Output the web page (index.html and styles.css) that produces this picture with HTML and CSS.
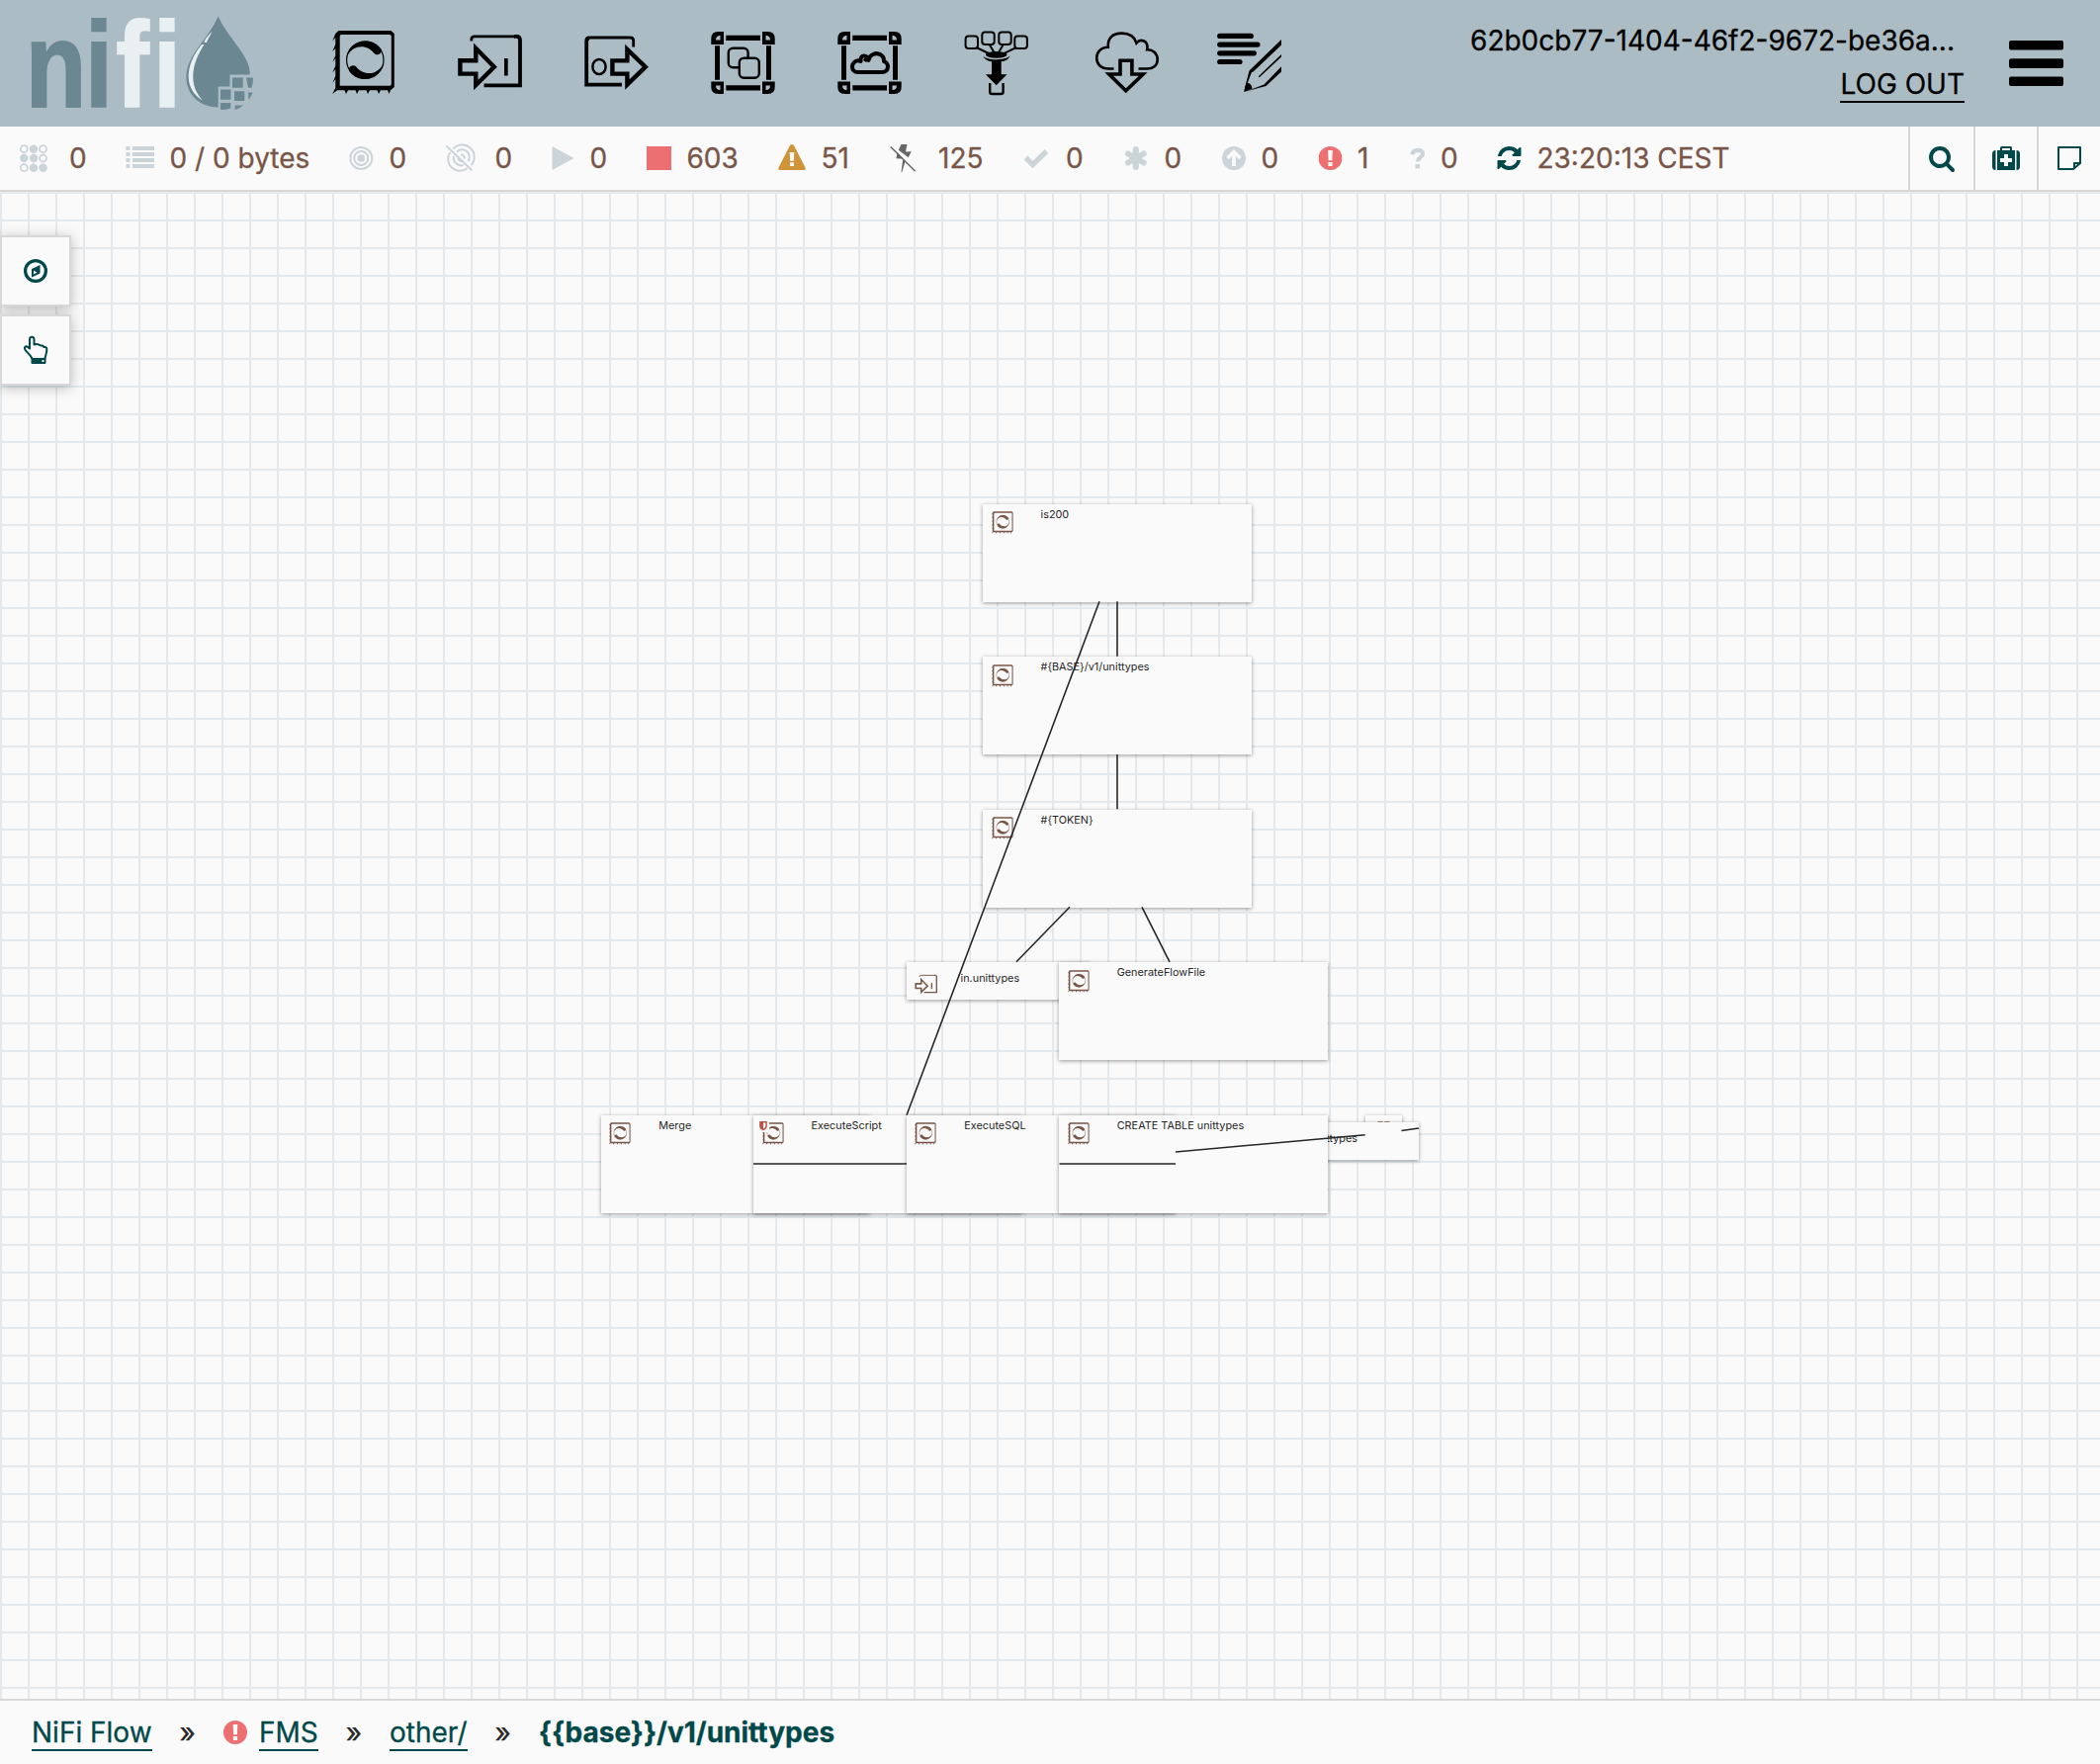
FILE: index.html
```html
<!DOCTYPE html>
<html lang="en">
<head>
<meta charset="utf-8">
<title>NiFi Flow</title>
<link rel="stylesheet" href="styles.css">
</head>
<body>
<svg class="defs" width="0" height="0" aria-hidden="true">
  <symbol id="processor" viewBox="30 30 66 66">
    <path fill-rule="evenodd" d="M38.5 31H91.5L94.8 34V88L91 91.3 89.5 95 88 91.3H81L79 95 77.5 91.3H70L68 95 66.500 91.300H59L57 95 55.500 91.300H48L46 95 44.500 91.300H37L32.300 95 35.300 88.500V80L32.300 84 35.300 77V70L32.300 73.500 35.300 66.500V59L32.300 63 35.300 56V49L32.300 52 35.300 45V38L32.300 41.500 35.300 34ZM41.500 35A1.800 1.800 0 0 0 39.700 36.800V86.700H90A1.800 1.800 0 0 0 91.800 84.900V36.800A1.800 1.800 0 0 0 90 35Z"/>
    <circle cx="65.300" cy="60.700" r="18.700" fill="none" stroke="currentColor" stroke-width="1.200"/>
    <path id="crescent" d="M46.500 57.500C49 47 57 41.400 65.300 41.400C72 41.400 77.500 44 81.300 49.500C83.500 53.500 77.500 57.500 74.300 53.800C68.500 46 54.500 43 46.500 57.500Z"/>
    <use href="#crescent" transform="rotate(180 65.300 60.700)"/>
  </symbol>
  <symbol id="input-port" viewBox="30 30 66 66">
    <path d="M44.800 41.500V40Q44.800 36.800 48 36.800H90" fill="none" stroke="currentColor" stroke-width="2.800"/>
    <path d="M88 36.800H90.500Q94 36.800 94 40.500V86.300H57.500" fill="none" stroke="currentColor" stroke-width="3.800"/>
    <path d="M33.400 61.200H49.300V48.800L67.800 67.700 49.300 86V74.600H33.400Z" fill="none" stroke="currentColor" stroke-width="4.400"/>
    <path d="M78 59H81.700V76.500H78Z"/>
  </symbol>
  <symbol id="frame" viewBox="0 0 128 128">
    <path fill-rule="evenodd" d="M31.300 45V39Q31.300 32 38.300 32H44V45ZM36 40.500H40.500V36H39.500Q36 36.500 36 40.500ZM95.700 45V39Q95.700 32 88.700 32H83V45ZM91 40.500H86.500V36H87.500Q91 36.500 91 40.500ZM31.300 82.500V88Q31.300 95 38.300 95H44V82.500ZM36 86.500H40.500V91H39.500Q36 90.500 36 86.500ZM95.700 82.500V88Q95.700 95 88.700 95H83V82.500ZM91 86.500H86.500V91H87.500Q91 90.500 91 86.500Z"/>
    <path d="M46.300 35.800H81V41H46.300ZM46.300 86.200H81V91.500H46.300ZM35 46.300H40V80.700H35ZM87 46.300H92V80.700H87Z"/>
  </symbol>
  <symbol id="bang" viewBox="0 0 24 24">
    <circle cx="12" cy="12" r="12"/>
    <path fill="#fafafa" d="M9.700 4H14.300L13.900 14.300H10.100ZM9.900 16H14.100V20H9.900Z"/>
  </symbol>
</svg>

<header class="header">
  <svg class="logo" width="304" height="128" viewBox="0 0 304 128">
    <g class="wordmark" transform="scale(.82 1)">
      <text x="31.500" y="108" fill="#6b8791" stroke="#6b8791">n</text>
      <text x="105" y="108" fill="#6b8791" stroke="#6b8791">i</text>
      <text x="143" y="108" fill="#eaeff2" stroke="#eaeff2">f</text>
      <text x="189" y="108" fill="#eaeff2" stroke="#eaeff2">i</text>
    </g>
    <path fill="#6b8791" d="M220.700 16.500C226 29 236 40 244 52C250 61 253 68 252.800 75.500H232.500V87.500H220.700V108.500C201 108 188.400 95 188.400 78C188.400 66 194 57 202 46C210 35 216 27 220.700 16.500Z"/>
    <path fill="#eaeff2" d="M214.500 31.500C210 37 207.500 39 206.500 43H209C210 39 213 36 214.500 31.500ZM206.500 45H204C195 56 190.500 67 190.700 78C191 89 197 97 205 101.500C198 94 195 86 195.300 76C195.500 66 200 55 206.500 45Z"/>
    <path fill="#6b8791" d="M235 78.500H245.700V88.700H235ZM249 78.500H256Q256 84 254.500 88.700H251ZM223 90.500H233.500V100.700H223ZM237 92.300H247.300V102H237ZM251 93.500H255.500Q254.500 97 251.500 100.700ZM223 104H233.300V109.500Q228 111.500 223 111ZM237.500 106.500H246Q242.500 109.800 238 111Z"/>
  </svg>
  <nav class="tools">
    <svg class="tool" viewBox="0 0 128 128"><use href="#processor" x="30" y="30" width="66" height="66"/></svg>
    <svg class="tool" viewBox="0 0 128 128"><use href="#input-port" x="30" y="30" width="66" height="66"/></svg>
    <svg class="tool" viewBox="0 0 128 128" fill="none" stroke="currentColor">
      <path stroke-width="2.800" d="M34 40Q34.500 38 37.500 38H77.500Q80.700 38 80.700 41.500V47.500"/>
      <path stroke-width="3.800" d="M36 38.500Q33.200 38.500 33.200 42V85.600H69"/>
      <ellipse cx="46" cy="67.500" rx="6.600" ry="7.500" stroke-width="2.500"/>
      <path stroke-width="4.400" d="M59.400 61.400H74.400V50L92.800 67.700 74.400 85.600V74.600H59.400Z"/>
    </svg>
    <svg class="tool" viewBox="0 0 128 128">
      <use href="#frame"/>
      <g fill="#abbcc4" stroke="currentColor" stroke-width="2.400">
        <rect x="48.800" y="48.800" width="19.800" height="19.500" rx="4.500"/>
        <rect x="59.800" y="58.700" width="20" height="20" rx="4.500"/>
      </g>
    </svg>
    <svg class="tool" viewBox="0 0 128 128">
      <use href="#frame"/>
      <path fill="none" stroke="currentColor" stroke-width="4" stroke-linejoin="round" d="M51.500 73H76.500C83.500 72.500 83.500 63.500 78 62C78.500 56 72 52.500 67 55C64.500 56 63 58 62.500 61C61 55.500 54 54 54.500 62C50 59.500 46 64 46 67.500C46 71 48.500 73 51.500 73ZM61.500 57.500L58.500 62"/>
    </svg>
    <svg class="tool" viewBox="0 0 128 128">
      <g fill="none" stroke="currentColor" stroke-width="2">
        <rect x="32.600" y="36.500" width="12.400" height="12.500" rx="3"/>
        <rect x="49.300" y="32.500" width="12.400" height="12.500" rx="3"/>
        <rect x="66.300" y="32.500" width="12.400" height="12.500" rx="3"/>
        <rect x="82.300" y="36.500" width="12.600" height="12.500" rx="3"/>
        <path d="M43.500 48L56 54M57 45.500L61.500 53M70.500 45.500L66 53M84 48L71.500 54"/>
        <path stroke-width="2.400" d="M57.200 84V93Q57.200 95 59.200 95H68.500Q70.600 95 70.600 93V84"/>
      </g>
      <ellipse cx="63.700" cy="55.300" rx="10.800" ry="3.400"/>
      <path d="M50 56.500C55 61.500 72 61.500 77.700 56.500C76 60 73 61.800 68.700 62.300V75.300H74.500L63.700 86.300 53 75.300H59V62.300C55 61.800 51.500 60 50 56.500Z"/>
    </svg>
    <svg class="tool" viewBox="0 0 128 128" fill="none" stroke="currentColor">
      <path stroke-width="2.600" d="M54.500 69.500H49.500C41 69.500 37.200 64.500 37.200 58.800C37.200 53 41 48 48.800 47.700C48 38 54 33.600 62.500 33.600C70.500 33.600 75.500 37 77.500 43.500C81.500 38.500 90 41 88.200 50.300C94 50 98.700 54 98.700 60.300C98.700 66.500 94 69.500 88 69.500H79.500"/>
      <path stroke-width="3.600" d="M61 61.200H72.900V75H84.200L66.700 91.800 49.700 75H61Z"/>
    </svg>
    <svg class="tool" viewBox="0 0 128 128" fill="none" stroke="currentColor">
      <path stroke-width="5.200" stroke-linecap="round" d="M33.700 36.400H65.300M33.700 45.100H72M33.700 53.800H68.300M33.700 62.500H54"/>
      <g fill="currentColor" stroke="none">
        <path d="M96 40V45.500L67.500 72.500 66 73 60.500 87 58.300 93 58.500 91 63.500 71.500Z"/>
        <path d="M96 55V57.500L73.500 78.500 73 77ZM96 67.300V72.500L80.500 87 58.300 93 78.500 85.500ZM60.500 83.500Q66 84 66.500 89.500L58.300 93Z"/>
      </g>
    </svg>
  </nav>
  <div class="account">
    <span class="user">62b0cb77-1404-46f2-9672-be36a...</span>
    <a class="logout">LOG OUT</a>
  </div>
  <svg class="menu" width="56" height="48" viewBox="0 0 56 48"><path d="M0 3a2 2 0 0 1 2-2H53a2 2 0 0 1 2 2V8.500a2 2 0 0 1-2 2H2a2 2 0 0 1-2-2ZM0 21.300a2 2 0 0 1 2-2H53a2 2 0 0 1 2 2V27a2 2 0 0 1-2 2H2a2 2 0 0 1-2-2ZM0 39.500a2 2 0 0 1 2-2H53a2 2 0 0 1 2 2V45a2 2 0 0 1-2 2H2a2 2 0 0 1-2-2Z"/></svg>
</header>

<section class="status">
  <div class="stats">
    <div class="stat"><svg width="38" height="32"><g fill="currentColor"><circle cx="14" cy="6.700" r="4.200"/><circle cx="4.300" cy="16" r="4.200"/><circle cx="14" cy="16" r="4.200"/><circle cx="14" cy="25.700" r="4.200"/><circle cx="23.600" cy="25.700" r="4.200"/></g><g fill="none" stroke="currentColor" stroke-width="1.800"><circle cx="4.300" cy="6.700" r="3.500"/><circle cx="23.600" cy="6.700" r="3.500"/><circle cx="23.600" cy="16" r="3.500"/><circle cx="4.300" cy="25.700" r="3.500"/></g></svg><span>0</span></div>
    <div class="stat"><svg width="33.500" height="32"><path d="M1.500 4H5.500V8H1.500ZM8 4H30V8H8ZM1.500 10H5.500V14H1.500ZM8 10H30V14H8ZM1.500 16H5.500V20H1.500ZM8 16H30V20H8ZM1.500 22H5.500V26H1.500ZM8 22H30V26H8Z"/></svg><span>0 / 0 bytes</span></div>
    <div class="stat"><svg width="29.500" height="32"><circle cx="13.300" cy="16" r="3.800"/><g fill="none" stroke="currentColor" stroke-width="2"><circle cx="13.300" cy="16" r="7"/><circle cx="13.300" cy="16" r="11"/></g></svg><span>0</span></div>
    <div class="stat"><svg width="38.500" height="32"><g fill="none" stroke="currentColor" stroke-width="2"><path d="M8.500 6.500A12 12 0 0 1 26.500 23M5.300 10A12 12 0 0 0 22.500 26.300M12 9.500A7.500 7.500 0 0 1 23.500 19M9 14A7.500 7.500 0 0 0 18.500 23M16 12.500A3.500 3.500 0 0 1 19.800 16.500M13.500 15A3.500 3.500 0 0 0 16.500 19.200M1.500 3.500L27.500 28.500"/></g></svg><span>0</span></div>
    <div class="stat"><svg width="26.500" height="32"><path d="M.5 4L22.500 16 .5 28Z"/></svg><span>0</span></div>
    <div class="stat"><svg class="red" width="28.500" height="32"><path d="M0 4H25V28H0Z"/></svg><span>603</span></div>
    <div class="stat"><svg class="amber" width="32.500" height="32"><path d="M15 2Q16.500 2 17.500 4L28.500 25.500Q29.500 28 27 28H3Q.5 28 1.500 25.500L12.500 4Q13.500 2 15 2Z"/><path fill="#fafafa" d="M12.700 10H17.300L16.900 18.800H13.100ZM13 20.300H17V24H13Z"/></svg><span>51</span></div>
    <div class="stat"><svg class="slate" width="37" height="32"><path d="M11.500 2H17.500L16 9.500 21.800 9.200 18.700 15.300 8.800 7.800ZM7.500 10L15.500 19.500 12.300 30H11.500L13.300 16.500 6.500 16.300Z"/><path fill="none" stroke="currentColor" stroke-width="1.500" d="M.8 4.500L25.500 29"/></svg><span>125</span></div>
    <div class="stat"><svg width="32" height="32"><path fill="none" stroke="currentColor" stroke-width="5.400" d="M3.500 15.500L10.500 22.500 24.500 9"/></svg><span>0</span></div>
    <div class="stat"><svg width="29.500" height="32"><path fill="none" stroke="currentColor" stroke-width="6" stroke-linecap="round" d="M12.800 7V25M4.900 11.500L20.700 20.500M4.900 20.500L20.700 11.500"/></svg><span>0</span></div>
    <div class="stat"><svg width="27.500" height="32"><circle cx="12" cy="16" r="12"/><path fill="none" stroke="#fafafa" stroke-width="3.600" d="M12 24V9.500M5.500 16L12 9.500 18.500 16"/></svg><span>0</span></div>
    <div class="stat"><svg class="red" width="28" height="32"><use href="#bang" x=".5" y="4" width="24" height="24"/></svg><span>1</span></div>
    <div class="stat"><svg width="20" height="32"><path fill="none" stroke="currentColor" stroke-width="4.200" d="M3.200 12.300C4.500 6.500 14.200 6.500 14 11.700C14 15 9 15.500 8.800 19.500"/><path d="M6.500 22H11V26.300H6.500Z"/></svg><span>0</span></div>
    <div class="stat"><svg class="teal" width="29.500" height="32"><svg x="-.5" y="2" width="28" height="28" viewBox="0 0 1792 1792"><path d="M1639 1056q0 5-1 7-64 268-268 434.500t-478 166.500q-146 0-282.500-55t-243.500-157l-129 129q-19 19-45 19t-45-19-19-45v-448q0-26 19-45t45-19h448q26 0 45 19t19 45-19 45l-137 137q71 66 161 102t187 36q134 0 250-65t186-179q11-17 53-117 8-23 30-23h192q13 0 22.500 9.500t9.500 22.500zm25-800v448q0 26-19 45t-45 19h-448q-26 0-45-19t-19-45 19-45l138-138q-148-137-349-137-134 0-250 65t-186 179q-11 17-53 117-8 23-30 23h-199q-13 0-22.500-9.500t-9.500-22.500v-7q65-268 270-434.500t480-166.500q146 0 284 55.500t245 156.500l130-129q19-19 45-19t45 19 19 45z"/></svg></svg><span>23:20:13 CEST</span></div>
  </div>
  <div class="actions">
    <button class="action"><svg width="28" height="28" viewBox="0 0 1792 1792"><path d="M1216 832q0-185-131.500-316.500t-316.500-131.500-316.500 131.500-131.500 316.500 131.500 316.500 316.500 131.500 316.500-131.500 131.500-316.500zm512 832q0 52-38 90t-90 38q-54 0-90-38l-343-342q-179 124-399 124-143 0-273.500-55.500t-225-150-150-225-55.500-273.500 55.500-273.500 150-225 225-150 273.500-55.500 273.500 55.500 225 150 150 225 55.500 273.500q0 220-124 399l343 343q37 37 37 90z"/></svg></button>
    <button class="action"><svg width="28" height="28"><path fill-rule="evenodd" d="M3.500 6V26Q0 26 0 22.500V9.500Q0 6 3.500 6ZM24.500 6Q28 6 28 9.500V22.500Q28 26 24.500 26ZM5 6H8V3.500Q8 2 9.500 2H18.500Q20 2 20 3.500V6H23V26H5ZM10 6H18V4H10ZM12 10V14H8V18H12V22H16V18H20V14H16V10Z"/></svg></button>
    <button class="action"><svg width="28" height="28"><path fill="none" stroke="currentColor" stroke-width="2" stroke-linejoin="round" d="M3 3H25V19L18 25H3ZM25 19H19V25"/></svg></button>
  </div>
</section>

<main class="canvas">
  <aside class="palette">
    <button class="panel"><svg width="28" height="28"><circle cx="14" cy="14" r="10.400" fill="none" stroke="currentColor" stroke-width="3.200"/><path fill-rule="evenodd" d="M18.500 8V16.500L10 20.500V12ZM12 13.500V17.500L15.500 15.500Z"/></svg></button>
    <button class="panel"><svg width="28" height="30"><path fill="none" stroke="currentColor" stroke-width="2" stroke-linejoin="round" d="M10.500 23.500C8.500 19.500 5.500 17.500 3.500 14.800C1.500 11.500 5 9.800 8 13.500V4.500C8 .8 12.500 .8 12.500 4.500V9.500C14.500 8.800 17 9 18.500 10.300C21 10.300 22 11 22.500 12C25 11.500 25.500 13 25.300 15C25.300 18.500 24 20 23.500 23.500"/><path fill-rule="evenodd" d="M9.500 23H24.500V28Q24.500 29 23.500 29H10.500Q9.500 29 9.500 28ZM20.500 25V27H22.500V25Z"/></svg></button>
  </aside>

  <div class="node n-is200"><svg><use href="#processor"/></svg><span>is200</span></div>
  <div class="node n-base"><svg><use href="#processor"/></svg><span>#{BASE}/v1/unittypes</span></div>
  <div class="node n-token"><svg><use href="#processor"/></svg><span>#{TOKEN}</span></div>
  <div class="node port n-in"><svg><use href="#input-port"/></svg><span>in.unittypes</span></div>
  <div class="node n-generate"><svg><use href="#processor"/></svg><span>GenerateFlowFile</span></div>
  <div class="node funnel"><svg viewBox="0 0 24 24"><path fill="none" stroke="currentColor" stroke-width="1.400" d="M6.500 4V1H10.500V4M13.500 4V1H17.500V4"/></svg></div>
  <div class="node port n-out"><svg></svg><span>out.unittypes</span></div>
  <div class="node n-merge"><svg><use href="#processor"/></svg><span>Merge</span></div>
  <div class="node n-script"><svg><use href="#processor"/></svg><span>ExecuteScript</span>
    <svg class="shield" viewBox="0 0 10 11"><path fill="#fafafa" d="M0 0H10V11H0Z"/><path fill="#ba554a" fill-rule="evenodd" d="M1 1H8V5.500Q8 8 4.500 9.500Q1 8 1 5.500ZM4.600 2.300V8Q6.700 6.800 6.700 5.300V2.300Z"/></svg>
  </div>
  <div class="node n-sql"><svg><use href="#processor"/></svg><span>ExecuteSQL</span></div>
  <div class="node n-create"><svg><use href="#processor"/></svg><span>CREATE TABLE unittypes</span></div>

  <svg class="links" viewBox="0 194 2124 1524">
    <path d="M1130 608.300V663.700M1112 608.300L917 1127.700M1130 763V818.200M1082 917.300L1028 972.800M1155 917.300L1183 972.800M762 1177H917M1071.500 1177H1189M1189 1165L1380.700 1147.700M1417.500 1143.500L1435 1141"/>
  </svg>
</main>

<footer class="crumbs">
  <a class="crumb">NiFi Flow</a>
  <span class="sep">»</span>
  <svg class="red crumb-icon" width="24" height="24"><use href="#bang"/></svg>
  <a class="crumb">FMS</a>
  <span class="sep">»</span>
  <a class="crumb">other/</a>
  <span class="sep">»</span>
  <strong class="current">{{base}}/v1/unittypes</strong>
</footer>
</body>
</html>
```
FILE: styles.css
```css
* { box-sizing: border-box; }

body {
  margin: 0;
  width: 2124px;
  height: 1784px;
  display: flex;
  flex-direction: column;
  overflow: hidden;
  background: #fafafa;
  font: 28px/36px Inter, "Liberation Sans", sans-serif;
  color: #262626;
}

svg { display: block; flex: none; fill: currentColor; }
.defs { position: absolute; }

button {
  padding: 0;
  border: 0;
  background: #fafafa;
  color: #004849;
  display: flex;
  align-items: center;
  justify-content: center;
}

.red { color: #ec7072; }

/* Header */
.header {
  height: 128px;
  flex: none;
  display: flex;
  align-items: center;
  background: #abbcc4;
  color: #000;
}

.wordmark {
  font: bold 123px "Liberation Sans", Arial, sans-serif;
  stroke-width: 1.8px;
}

.tools { display: flex; }
.tool { width: 128px; height: 128px; }
.tool[fill="none"] { fill: none; }

.account {
  margin-left: auto;
  margin-right: 45px;
  display: flex;
  flex-direction: column;
  align-items: flex-end;
  gap: 9px;
  -webkit-text-stroke: .3px;
}
.user { padding-right: 10px; margin-top: -1px; }
.logout { line-height: 34px; border-bottom: 2px solid #000; }
.menu { margin-right: 36px; }

/* Flow status */
.status {
  height: 66px;
  flex: none;
  display: flex;
  justify-content: space-between;
  border-bottom: 2px solid #d8d8d8;
}

.stats {
  padding-left: 20px;
  display: grid;
  grid-template-columns: 106px 226px 98px 108px 96px 132px 114px 134px 102px 100px 97px 92px 88px auto;
  align-items: center;
  color: #795548;
  -webkit-text-stroke: .3px;
}
.stat { display: flex; align-items: center; gap: 12px; white-space: nowrap; }
.stat svg { color: #cbd4d9; overflow: visible; }
.stat svg.red { color: #ec7072; }
.stat svg.amber { color: #cf9338; }
.stat svg.slate { color: #666; }
.stat svg.teal, .stat svg.teal svg { color: #004849; }

.actions { display: flex; }
.action { width: 64px; border-left: 2px solid #d8d8d8; }
.action:first-child { width: 66px; }

/* Canvas */
.canvas {
  position: relative;
  flex: 1;
  background-image:
    linear-gradient(to right, #e3e9ec 2px, transparent 2px),
    linear-gradient(to bottom, #e3e9ec 2px, transparent 2px);
  background-size: 28px 28px;
}

.palette {
  padding-top: 44px;
  display: flex;
  flex-direction: column;
  gap: 8px;
}
.panel {
  width: 72px;
  height: 72px;
  border: 2px solid #d8d8d8;
  box-shadow: 0 2px 12px rgba(0, 0, 0, .25);
}

.node {
  position: absolute;
  width: 272px;
  height: 99px;
  padding: 7.500px 7.500px;
  display: flex;
  background: #fafafa;
  box-shadow: 0 1px 4px rgba(0, 0, 0, .4);
  font-size: 10.800px;
  line-height: 14px;
  letter-spacing: .04px;
  white-space: nowrap;
}
.node > svg { width: 23px; height: 23px; color: #795548; }
.node > span { margin: -3.500px 0 0 28px; }
.node .shield { position: absolute; left: 5px; top: 5px; width: 11px; height: 12px; }

.port { width: 185.500px; height: 37.500px; padding: 10.500px 7.500px; }
.port > span { margin: -.5px 0 0 24px; }
.funnel { width: 37px; height: 37px; padding: 6px 7px; left: 1381px; top: 934px; }

.n-is200 { left: 994px; top: 315.600px; }
.n-base { left: 994px; top: 470px; }
.n-token { left: 994px; top: 624.600px; }
.n-in { left: 917px; top: 779px; }
.n-generate { left: 1071.200px; top: 779px; }
.n-out { left: 1249.500px; top: 941px; }
.n-merge { left: 607.700px; top: 933.700px; }
.n-script { left: 762px; top: 933.700px; }
.n-sql { left: 916.700px; top: 933.700px; }
.n-create { left: 1071.200px; top: 933.700px; }
.n-out > span { margin-left: 26px; }

.links {
  position: absolute;
  inset: 0;
  width: 2124px;
  height: 1524px;
  fill: none;
  stroke: #262626;
  stroke-width: 1.600;
  pointer-events: none;
}

/* Breadcrumbs */
.crumbs {
  height: 66px;
  flex: none;
  padding-left: 32px;
  display: flex;
  align-items: center;
  border-top: 2px solid #d8d8d8;
  background: #fafafa;
  color: #004849;
  -webkit-text-stroke: .3px;
}
.crumb { line-height: 34px; margin-top: 2px; border-bottom: 2px solid #004849; }
.sep { padding: 0 28px; color: #262626; }
.crumb-icon { margin-right: 12px; }
.current { font-weight: 700; }
```
